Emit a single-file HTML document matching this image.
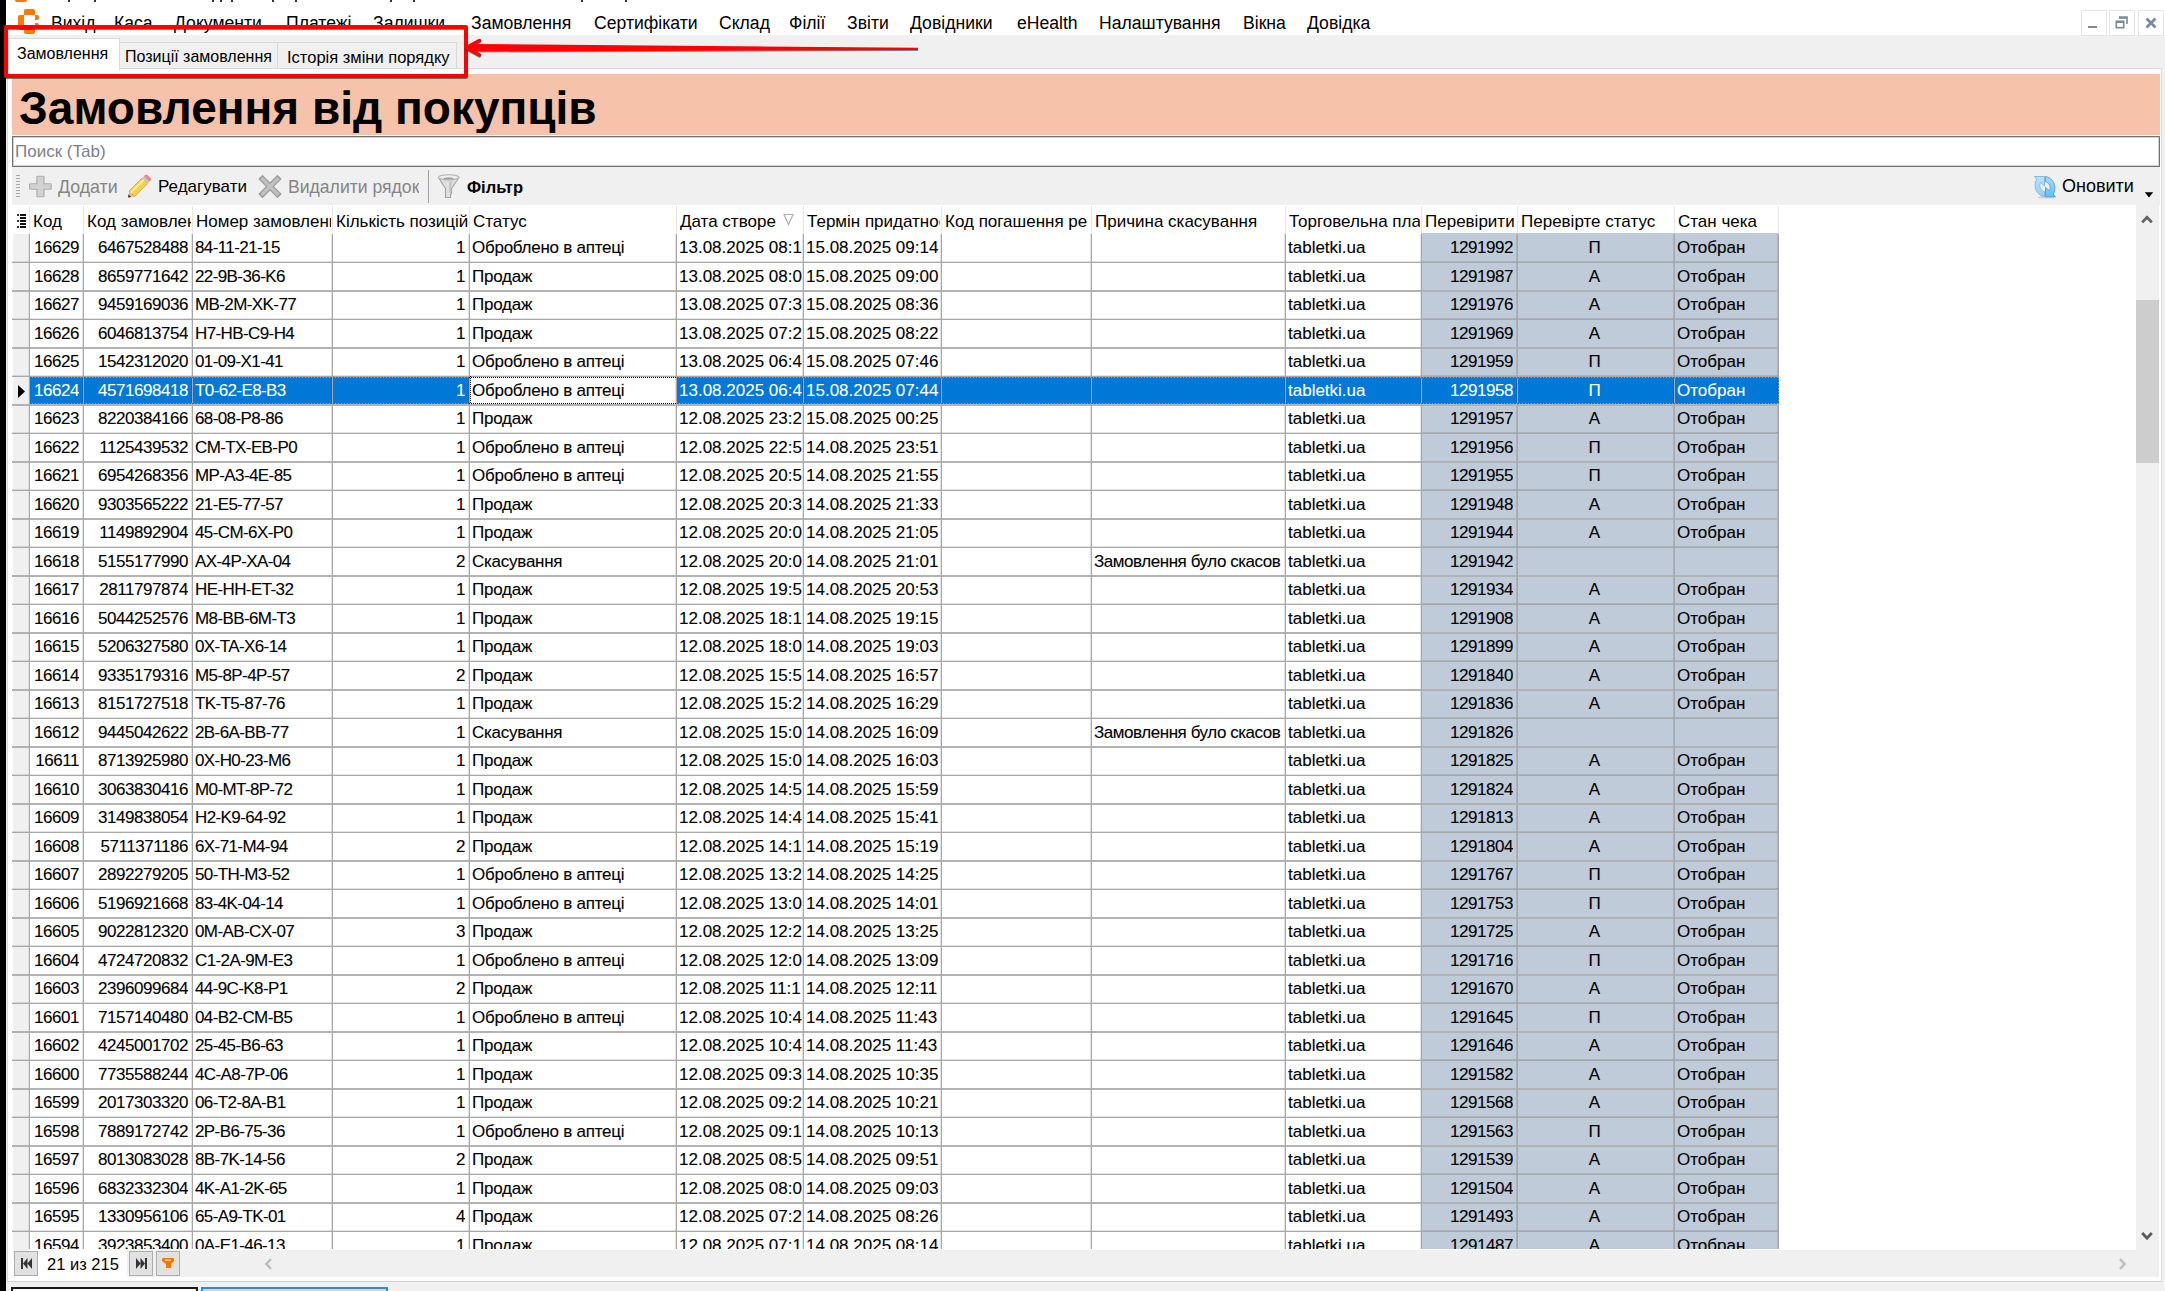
<!DOCTYPE html>
<html><head><meta charset="utf-8"><style>
*{margin:0;padding:0;box-sizing:border-box}
html,body{width:2165px;height:1291px;overflow:hidden;background:#fff;font-family:"Liberation Sans",sans-serif;color:#000}
.a{position:absolute}
.t{position:absolute;white-space:nowrap;overflow:hidden}
#grid .c{position:absolute;white-space:nowrap;overflow:hidden;font-size:17px;line-height:28px;-webkit-text-stroke:0.1px currentColor}
#grid .h{-webkit-text-stroke:0}
#grid .n{letter-spacing:-0.45px}
#grid .m{letter-spacing:-0.6px}
#grid .s{letter-spacing:-0.25px}
#grid .p{letter-spacing:-0.45px}
.menu span{position:absolute;top:12px;font-size:17.6px;line-height:22px;color:#000}
</style></head><body>

<div class="a" style="left:0;top:0;width:6px;height:1291px;background:#000"></div>
<div class="a" style="left:6px;top:35px;width:2159px;height:1256px;background:#f0f0f0"></div>
<div class="a" style="left:68px;top:0;width:2px;height:2px;background:#333"></div>
<div class="a" style="left:94px;top:0;width:2px;height:2px;background:#333"></div>
<div class="a" style="left:212px;top:0;width:2px;height:2px;background:#333"></div>
<div class="a" style="left:220px;top:0;width:2px;height:2px;background:#333"></div>
<div class="a" style="left:231px;top:0;width:2px;height:2px;background:#333"></div>
<div class="a" style="left:272px;top:0;width:2px;height:2px;background:#333"></div>
<div class="a" style="left:295px;top:0;width:2px;height:2px;background:#333"></div>
<div class="a" style="left:390px;top:0;width:2px;height:2px;background:#333"></div>
<div class="a" style="left:413px;top:0;width:2px;height:2px;background:#333"></div>
<div class="a" style="left:581px;top:0;width:2px;height:2px;background:#333"></div>
<div class="a" style="left:625px;top:0;width:2px;height:2px;background:#333"></div>
<div class="menu">
<span style="left:51px">Вихід</span>
<span style="left:114px">Каса</span>
<span style="left:174px">Документи</span>
<span style="left:286px">Платежі</span>
<span style="left:373px">Залишки</span>
<span style="left:471px">Замовлення</span>
<span style="left:594px">Сертифікати</span>
<span style="left:719px">Склад</span>
<span style="left:789px">Філії</span>
<span style="left:847px">Звіти</span>
<span style="left:910px">Довідники</span>
<span style="left:1017px">eHealth</span>
<span style="left:1099px">Налаштування</span>
<span style="left:1243px">Вікна</span>
<span style="left:1307px">Довідка</span>
</div>
<div class="a" style="left:24px;top:9px;width:11px;height:6px;background:#ff7800;border-radius:2px 2px 0 0"></div>
<div class="a" style="left:18px;top:15px;width:6px;height:15px;background:#ff7800;border-radius:2px 0 0 2px"></div>
<div class="a" style="left:35px;top:15px;width:4px;height:5px;background:#ff7800;border-radius:0 2px 2px 0"></div>
<div class="a" style="left:35px;top:23px;width:4px;height:5px;background:#ff7800;border-radius:0 2px 2px 0"></div>
<div class="a" style="left:24px;top:29px;width:11px;height:5px;background:#ff7800;border-radius:0 0 2px 2px"></div>
<div class="a" style="left:15px;top:0;width:12px;height:2px;background:#ff7800;border-radius:0 0 2px 2px"></div>
<div class="a" style="left:2081px;top:10px;width:26px;height:26px;border:1px solid #e6e6e6;background:#fff"></div>
<div class="a" style="left:2109px;top:10px;width:26px;height:26px;border:1px solid #e6e6e6;background:#fff"></div>
<div class="a" style="left:2138px;top:10px;width:26px;height:26px;border:1px solid #e6e6e6;background:#fff"></div>
<div class="a" style="left:2088px;top:26px;width:9px;height:2px;background:#7b8a99"></div>
<svg class="a" style="left:2115px;top:16px" width="14" height="14" viewBox="0 0 14 14"><path d="M4 1h8v7" fill="none" stroke="#7b8a99" stroke-width="1.6"/><rect x="4" y="1" width="8" height="1.8" fill="#7b8a99"/><rect x="1.3" y="5.3" width="7.4" height="6.4" fill="none" stroke="#7b8a99" stroke-width="1.6"/><rect x="1" y="5" width="8" height="2" fill="#7b8a99"/></svg>
<svg class="a" style="left:2145px;top:17px" width="12" height="12" viewBox="0 0 12 12"><path d="M1.5 1.5l9 9M10.5 1.5l-9 9" stroke="#7b8a99" stroke-width="2.8"/></svg>
<div class="a" style="left:119px;top:42px;width:159px;height:27px;background:#f0f0f0;border:1px solid #d9d9d9;border-bottom:none"></div>
<div class="a" style="left:278px;top:42px;width:179px;height:27px;background:#f0f0f0;border:1px solid #d9d9d9;border-bottom:none;border-left:none"></div>
<div class="a" style="left:7px;top:68px;width:2155px;height:1214px;background:#fff;border:1px solid #dadada"></div>
<div class="a" style="left:8px;top:38px;width:112px;height:32px;background:#fff;border:1px solid #d9d9d9;border-bottom:none"></div>
<div class="t" style="left:17px;top:44px;font-size:16px;line-height:20px;color:#000">Замовлення</div>
<div class="t" style="left:125px;top:47px;font-size:16px;line-height:20px;color:#000">Позиції замовлення</div>
<div class="t" style="left:287px;top:47px;font-size:16.5px;line-height:20px;color:#000">Історія зміни порядку</div>
<div class="a" style="left:12px;top:74px;width:2148px;height:61px;background:#f6c3aa"></div>
<div class="t" style="left:19px;top:83px;font-size:46px;line-height:50px;font-weight:bold">Замовлення від покупців</div>
<div class="a" style="left:12px;top:136px;width:2148px;height:31px;background:#fff;border:1px solid #727272;box-shadow:inset 0 0 0 1px rgba(0,0,0,0.18)"></div>
<div class="t" style="left:15px;top:140.5px;font-size:17px;line-height:22px;color:#7d7d90">Поиск (Tab)</div>
<div class="a" style="left:12px;top:167px;width:2148px;height:38px;background:#f0f0f0"></div>
<div class="a" style="left:16px;top:175px;width:4px;height:1px;background:#a8a8a8"></div>
<div class="a" style="left:16px;top:178px;width:4px;height:1px;background:#a8a8a8"></div>
<div class="a" style="left:16px;top:181px;width:4px;height:1px;background:#a8a8a8"></div>
<div class="a" style="left:16px;top:184px;width:4px;height:1px;background:#a8a8a8"></div>
<div class="a" style="left:16px;top:187px;width:4px;height:1px;background:#a8a8a8"></div>
<div class="a" style="left:16px;top:190px;width:4px;height:1px;background:#a8a8a8"></div>
<div class="a" style="left:16px;top:193px;width:4px;height:1px;background:#a8a8a8"></div>
<div class="a" style="left:16px;top:196px;width:4px;height:1px;background:#a8a8a8"></div>
<svg class="a" style="left:28px;top:174px" width="25" height="25" viewBox="28 174 25 25"><path d="M37.7 176.2h5.5a0.8 0.8 0 0 1 .8.8v6.7h6.4a.8.8 0 0 1 .8.8v3.9a.8.8 0 0 1-.8.8H44v6.7a.8.8 0 0 1-.8.8h-5.5a.8.8 0 0 1-.8-.8v-6.7h-6.5a.8.8 0 0 1-.8-.8v-3.9a.8.8 0 0 1 .8-.8h6.5V177a.8.8 0 0 1 .8-.8z" fill="#d2d2d2" stroke="#ababab" stroke-width="1.1"/></svg>
<div class="t" style="left:58px;top:176px;font-size:17.8px;line-height:22px;color:#858585">Додати</div>
<svg class="a" style="left:124px;top:170px" width="32" height="32" viewBox="124 170 32 32"><g transform="translate(138.8 186.8) rotate(-45)"><path d="M-15 0L-10 -3.8H-9.5V3.8H-10z" fill="#f6b89a"/><path d="M-15.3 0L-12.6 -1.9V1.9z" fill="#333"/><rect x="-10" y="-3.9" width="18.5" height="7.8" fill="#f2d04a" stroke="#c8a838" stroke-width="0.8"/><rect x="-10" y="-2.6" width="18.5" height="2.2" fill="#fbeaa0"/><rect x="8.5" y="-3.9" width="2.5" height="7.8" fill="#c9c9c9"/><path d="M11 -3.9h1.8a1.6 1.6 0 0 1 1.6 1.6v4.6a1.6 1.6 0 0 1-1.6 1.6h-1.8z" fill="#ef8585"/></g></svg>
<div class="t" style="left:158px;top:176px;font-size:17px;line-height:22px;color:#000">Редагувати</div>
<svg class="a" style="left:256px;top:172px" width="28" height="28" viewBox="256 172 28 28"><path d="M262.5 179l15 15M277.5 179l-15 15" stroke="#9c9c9c" stroke-width="6" stroke-linecap="square"/><path d="M262.7 179.2l14.6 14.6M277.3 179.2l-14.6 14.6" stroke="#c0c0c0" stroke-width="3.4" stroke-linecap="square"/></svg>
<div class="t" style="left:288px;top:176px;font-size:17.6px;line-height:22px;color:#858585">Видалити рядок</div>
<div class="a" style="left:428px;top:170px;width:1px;height:33px;background:#a0a0a0"></div>
<svg class="a" style="left:434px;top:172px" width="30" height="30" viewBox="434 172 30 30"><path d="M438.5 177.5L445.5 188.5V197.5h5v-3l1-1V188.5L459 177.5z" fill="#e0e0e0" stroke="#a4a4a4" stroke-width="1.2" stroke-linejoin="round"/><path d="M449 181.5L452 181.5L451 188.5V193h-1.5z" fill="#c4c4c4"/><ellipse cx="448.7" cy="177.3" rx="10.2" ry="2.6" fill="#eeeeee" stroke="#b4b4b4" stroke-width="1.1"/><ellipse cx="448.7" cy="178.3" rx="5" ry="0.9" fill="#9a9a9a"/></svg>
<div class="t" style="left:467px;top:176px;font-size:16.5px;line-height:22px;font-weight:bold;color:#000">Фільтр</div>
<svg class="a" style="left:2033px;top:175px" width="24" height="24" viewBox="-1 -1 24 24"><defs><linearGradient id="rg1" x1="0" y1="0" x2="0" y2="1"><stop offset="0" stop-color="#b8e4fc"/><stop offset="1" stop-color="#9ccdf0"/></linearGradient><linearGradient id="rg2" x1="0" y1="0" x2="0" y2="1"><stop offset="0" stop-color="#58c4f8"/><stop offset="1" stop-color="#b0daf6"/></linearGradient></defs><ellipse cx="12" cy="21.4" rx="8.5" ry="1.2" fill="#bdbdbd" opacity="0.6"/><path d="M10.5 0.5L0.5 0.5L2.8 3.2C0.2 6.8 0.6 13 3.6 16.6C5.6 19 8 20.5 10.5 20.8L10.5 15.6C7.4 14.8 5.4 11.6 5.9 8.4C6 7.6 6.3 6.9 6.6 6.4L10.5 10Z" fill="url(#rg1)" stroke="#78b2e4" stroke-width="0.9"/><path d="M10.5 0.5L0.5 0.5L2.8 3.2C0.2 6.8 0.6 13 3.6 16.6C5.6 19 8 20.5 10.5 20.8L10.5 15.6C7.4 14.8 5.4 11.6 5.9 8.4C6 7.6 6.3 6.9 6.6 6.4L10.5 10Z" fill="url(#rg2)" stroke="#5898d4" stroke-width="0.9" transform="rotate(180 11 10.65)"/></svg>
<div class="t" style="left:2062px;top:175px;font-size:18px;line-height:22px;color:#000">Оновити</div>
<svg class="a" style="left:2144px;top:191px" width="10" height="8" viewBox="0 0 10 8"><path d="M0.8 1.2h8.4L5 6.4z" fill="#000"/></svg>
<div id="grid">
<div class="a" style="left:12px;top:205px;width:2124px;height:29px;background:#fff"></div>
<div class="a" style="left:20px;top:214px;width:6px;height:2px;background:#111"></div>
<div class="a" style="left:20px;top:217px;width:6px;height:2px;background:#111"></div>
<div class="a" style="left:20px;top:220px;width:6px;height:2px;background:#111"></div>
<div class="a" style="left:20px;top:223px;width:6px;height:2px;background:#111"></div>
<div class="a" style="left:20px;top:226px;width:6px;height:2px;background:#111"></div>
<div class="a" style="left:17px;top:214px;width:2px;height:2px;background:#333"></div>
<div class="a" style="left:17px;top:220px;width:2px;height:2px;background:#333"></div>
<div class="a" style="left:17px;top:226px;width:2px;height:2px;background:#333"></div>
<div class="a" style="left:29px;top:206px;width:1px;height:28px;background:#e6e6e6"></div>
<div class="c h" style="left:33px;top:208px;width:49px;line-height:28px">Код</div>
<div class="a" style="left:83px;top:206px;width:1px;height:28px;background:#e6e6e6"></div>
<div class="c h" style="left:87px;top:208px;width:104px;line-height:28px">Код замовлен</div>
<div class="a" style="left:192px;top:206px;width:1px;height:28px;background:#e6e6e6"></div>
<div class="c h" style="left:196px;top:208px;width:135px;line-height:28px">Номер замовленн</div>
<div class="a" style="left:332px;top:206px;width:1px;height:28px;background:#e6e6e6"></div>
<div class="c h" style="left:336px;top:208px;width:132px;line-height:28px">Кількість позицій</div>
<div class="a" style="left:469px;top:206px;width:1px;height:28px;background:#e6e6e6"></div>
<div class="c h" style="left:473px;top:208px;width:202px;line-height:28px">Статус</div>
<div class="a" style="left:676px;top:206px;width:1px;height:28px;background:#e6e6e6"></div>
<div class="c h" style="left:680px;top:208px;width:96px;line-height:28px">Дата створе</div>
<div class="a" style="left:803px;top:206px;width:1px;height:28px;background:#e6e6e6"></div>
<div class="c h" style="left:807px;top:208px;width:133px;line-height:28px">Термін придатнос</div>
<div class="a" style="left:941px;top:206px;width:1px;height:28px;background:#e6e6e6"></div>
<div class="c h" style="left:945px;top:208px;width:145px;line-height:28px">Код погашення ре</div>
<div class="a" style="left:1091px;top:206px;width:1px;height:28px;background:#e6e6e6"></div>
<div class="c h" style="left:1095px;top:208px;width:189px;line-height:28px">Причина скасування</div>
<div class="a" style="left:1285px;top:206px;width:1px;height:28px;background:#e6e6e6"></div>
<div class="c h" style="left:1289px;top:208px;width:131px;line-height:28px">Торговельна пла</div>
<div class="a" style="left:1421px;top:206px;width:1px;height:28px;background:#e6e6e6"></div>
<div class="c h" style="left:1425px;top:208px;width:91px;line-height:28px">Перевірити</div>
<div class="a" style="left:1517px;top:206px;width:1px;height:28px;background:#e6e6e6"></div>
<div class="c h" style="left:1521px;top:208px;width:152px;line-height:28px">Перевірте статус</div>
<div class="a" style="left:1674px;top:206px;width:1px;height:28px;background:#e6e6e6"></div>
<div class="c h" style="left:1678px;top:208px;width:99px;line-height:28px">Стан чека</div>
<div class="a" style="left:1778px;top:206px;width:1px;height:28px;background:#e6e6e6"></div>
<svg class="a" style="left:783px;top:213px" width="11" height="13" viewBox="0 0 11 13"><path d="M1 1.5h9L5.5 11.5z" fill="none" stroke="#b0b0b0" stroke-width="1.2"/></svg>
<div class="a" style="left:13px;top:234px;width:15px;height:28px;background:#f0f0f0"></div>
<div class="a" style="left:1421px;top:233px;width:357px;height:29px;background:#bfcbd8"></div>
<div class="c n" style="left:31px;width:48px;text-align:right;top:234px;height:28px;color:#000">16629</div>
<div class="c n" style="left:85px;width:103px;text-align:right;top:234px;height:28px;color:#000">6467528488</div>
<div class="c m" style="left:195px;width:136px;top:234px;height:28px;color:#000">84-11-21-15</div>
<div class="c n" style="left:334px;width:131px;text-align:right;top:234px;height:28px;color:#000">1</div>
<div class="c s" style="left:472px;width:203px;top:234px;height:28px;color:#000">Оброблено в аптеці</div>
<div class="c" style="left:679px;width:123px;top:234px;height:28px;color:#000">13.08.2025 08:1</div>
<div class="c" style="left:806px;width:134px;top:234px;height:28px;color:#000">15.08.2025 09:14</div>
<div class="c" style="left:1288px;width:132px;top:234px;height:28px;color:#000">tabletki.ua</div>
<div class="c n" style="left:1423px;width:90px;text-align:right;top:234px;height:28px;color:#000">1291992</div>
<div class="c" style="left:1517px;width:155px;text-align:center;top:234px;height:28px;color:#000">П</div>
<div class="c" style="left:1677px;width:100px;top:234px;height:28px;color:#000">Отобран</div>
<div class="a" style="left:13px;top:263px;width:15px;height:27px;background:#f0f0f0"></div>
<div class="a" style="left:1421px;top:262px;width:357px;height:28px;background:#bfcbd8"></div>
<div class="c n" style="left:31px;width:48px;text-align:right;top:263px;height:27px;color:#000">16628</div>
<div class="c n" style="left:85px;width:103px;text-align:right;top:263px;height:27px;color:#000">8659771642</div>
<div class="c m" style="left:195px;width:136px;top:263px;height:27px;color:#000">22-9B-36-K6</div>
<div class="c n" style="left:334px;width:131px;text-align:right;top:263px;height:27px;color:#000">1</div>
<div class="c s" style="left:472px;width:203px;top:263px;height:27px;color:#000">Продаж</div>
<div class="c" style="left:679px;width:123px;top:263px;height:27px;color:#000">13.08.2025 08:0</div>
<div class="c" style="left:806px;width:134px;top:263px;height:27px;color:#000">15.08.2025 09:00</div>
<div class="c" style="left:1288px;width:132px;top:263px;height:27px;color:#000">tabletki.ua</div>
<div class="c n" style="left:1423px;width:90px;text-align:right;top:263px;height:27px;color:#000">1291987</div>
<div class="c" style="left:1517px;width:155px;text-align:center;top:263px;height:27px;color:#000">А</div>
<div class="c" style="left:1677px;width:100px;top:263px;height:27px;color:#000">Отобран</div>
<div class="a" style="left:13px;top:291px;width:15px;height:28px;background:#f0f0f0"></div>
<div class="a" style="left:1421px;top:290px;width:357px;height:29px;background:#bfcbd8"></div>
<div class="c n" style="left:31px;width:48px;text-align:right;top:291px;height:28px;color:#000">16627</div>
<div class="c n" style="left:85px;width:103px;text-align:right;top:291px;height:28px;color:#000">9459169036</div>
<div class="c m" style="left:195px;width:136px;top:291px;height:28px;color:#000">MB-2M-XK-77</div>
<div class="c n" style="left:334px;width:131px;text-align:right;top:291px;height:28px;color:#000">1</div>
<div class="c s" style="left:472px;width:203px;top:291px;height:28px;color:#000">Продаж</div>
<div class="c" style="left:679px;width:123px;top:291px;height:28px;color:#000">13.08.2025 07:3</div>
<div class="c" style="left:806px;width:134px;top:291px;height:28px;color:#000">15.08.2025 08:36</div>
<div class="c" style="left:1288px;width:132px;top:291px;height:28px;color:#000">tabletki.ua</div>
<div class="c n" style="left:1423px;width:90px;text-align:right;top:291px;height:28px;color:#000">1291976</div>
<div class="c" style="left:1517px;width:155px;text-align:center;top:291px;height:28px;color:#000">А</div>
<div class="c" style="left:1677px;width:100px;top:291px;height:28px;color:#000">Отобран</div>
<div class="a" style="left:13px;top:320px;width:15px;height:27px;background:#f0f0f0"></div>
<div class="a" style="left:1421px;top:319px;width:357px;height:28px;background:#bfcbd8"></div>
<div class="c n" style="left:31px;width:48px;text-align:right;top:320px;height:27px;color:#000">16626</div>
<div class="c n" style="left:85px;width:103px;text-align:right;top:320px;height:27px;color:#000">6046813754</div>
<div class="c m" style="left:195px;width:136px;top:320px;height:27px;color:#000">H7-HB-C9-H4</div>
<div class="c n" style="left:334px;width:131px;text-align:right;top:320px;height:27px;color:#000">1</div>
<div class="c s" style="left:472px;width:203px;top:320px;height:27px;color:#000">Продаж</div>
<div class="c" style="left:679px;width:123px;top:320px;height:27px;color:#000">13.08.2025 07:2</div>
<div class="c" style="left:806px;width:134px;top:320px;height:27px;color:#000">15.08.2025 08:22</div>
<div class="c" style="left:1288px;width:132px;top:320px;height:27px;color:#000">tabletki.ua</div>
<div class="c n" style="left:1423px;width:90px;text-align:right;top:320px;height:27px;color:#000">1291969</div>
<div class="c" style="left:1517px;width:155px;text-align:center;top:320px;height:27px;color:#000">А</div>
<div class="c" style="left:1677px;width:100px;top:320px;height:27px;color:#000">Отобран</div>
<div class="a" style="left:13px;top:348px;width:15px;height:28px;background:#f0f0f0"></div>
<div class="a" style="left:1421px;top:347px;width:357px;height:29px;background:#bfcbd8"></div>
<div class="c n" style="left:31px;width:48px;text-align:right;top:348px;height:28px;color:#000">16625</div>
<div class="c n" style="left:85px;width:103px;text-align:right;top:348px;height:28px;color:#000">1542312020</div>
<div class="c m" style="left:195px;width:136px;top:348px;height:28px;color:#000">01-09-X1-41</div>
<div class="c n" style="left:334px;width:131px;text-align:right;top:348px;height:28px;color:#000">1</div>
<div class="c s" style="left:472px;width:203px;top:348px;height:28px;color:#000">Оброблено в аптеці</div>
<div class="c" style="left:679px;width:123px;top:348px;height:28px;color:#000">13.08.2025 06:4</div>
<div class="c" style="left:806px;width:134px;top:348px;height:28px;color:#000">15.08.2025 07:46</div>
<div class="c" style="left:1288px;width:132px;top:348px;height:28px;color:#000">tabletki.ua</div>
<div class="c n" style="left:1423px;width:90px;text-align:right;top:348px;height:28px;color:#000">1291959</div>
<div class="c" style="left:1517px;width:155px;text-align:center;top:348px;height:28px;color:#000">П</div>
<div class="c" style="left:1677px;width:100px;top:348px;height:28px;color:#000">Отобран</div>
<div class="a" style="left:13px;top:377px;width:15px;height:27px;background:#f0f0f0"></div>
<svg class="a" style="left:17px;top:385px" width="9" height="13" viewBox="0 0 9 13"><path d="M1 0l7 6.5L1 13z" fill="#000"/></svg>
<div class="a" style="left:29px;top:376px;width:1749px;height:28px;background:#0078d7"></div>
<div class="a" style="left:470px;top:377px;width:206px;height:27px;background:#fff"></div>
<div class="c n" style="left:31px;width:48px;text-align:right;top:377px;height:27px;color:#fff">16624</div>
<div class="c n" style="left:85px;width:103px;text-align:right;top:377px;height:27px;color:#fff">4571698418</div>
<div class="c m" style="left:195px;width:136px;top:377px;height:27px;color:#fff">T0-62-E8-B3</div>
<div class="c n" style="left:334px;width:131px;text-align:right;top:377px;height:27px;color:#fff">1</div>
<div class="c s" style="left:472px;width:203px;top:377px;height:27px;color:#000">Оброблено в аптеці</div>
<div class="c" style="left:679px;width:123px;top:377px;height:27px;color:#fff">13.08.2025 06:4</div>
<div class="c" style="left:806px;width:134px;top:377px;height:27px;color:#fff">15.08.2025 07:44</div>
<div class="c" style="left:1288px;width:132px;top:377px;height:27px;color:#fff">tabletki.ua</div>
<div class="c n" style="left:1423px;width:90px;text-align:right;top:377px;height:27px;color:#fff">1291958</div>
<div class="c" style="left:1517px;width:155px;text-align:center;top:377px;height:27px;color:#fff">П</div>
<div class="c" style="left:1677px;width:100px;top:377px;height:27px;color:#fff">Отобран</div>
<div class="a" style="left:13px;top:405px;width:15px;height:28px;background:#f0f0f0"></div>
<div class="a" style="left:1421px;top:404px;width:357px;height:29px;background:#bfcbd8"></div>
<div class="c n" style="left:31px;width:48px;text-align:right;top:405px;height:28px;color:#000">16623</div>
<div class="c n" style="left:85px;width:103px;text-align:right;top:405px;height:28px;color:#000">8220384166</div>
<div class="c m" style="left:195px;width:136px;top:405px;height:28px;color:#000">68-08-P8-86</div>
<div class="c n" style="left:334px;width:131px;text-align:right;top:405px;height:28px;color:#000">1</div>
<div class="c s" style="left:472px;width:203px;top:405px;height:28px;color:#000">Продаж</div>
<div class="c" style="left:679px;width:123px;top:405px;height:28px;color:#000">12.08.2025 23:2</div>
<div class="c" style="left:806px;width:134px;top:405px;height:28px;color:#000">15.08.2025 00:25</div>
<div class="c" style="left:1288px;width:132px;top:405px;height:28px;color:#000">tabletki.ua</div>
<div class="c n" style="left:1423px;width:90px;text-align:right;top:405px;height:28px;color:#000">1291957</div>
<div class="c" style="left:1517px;width:155px;text-align:center;top:405px;height:28px;color:#000">А</div>
<div class="c" style="left:1677px;width:100px;top:405px;height:28px;color:#000">Отобран</div>
<div class="a" style="left:13px;top:434px;width:15px;height:27px;background:#f0f0f0"></div>
<div class="a" style="left:1421px;top:433px;width:357px;height:28px;background:#bfcbd8"></div>
<div class="c n" style="left:31px;width:48px;text-align:right;top:434px;height:27px;color:#000">16622</div>
<div class="c n" style="left:85px;width:103px;text-align:right;top:434px;height:27px;color:#000">1125439532</div>
<div class="c m" style="left:195px;width:136px;top:434px;height:27px;color:#000">CM-TX-EB-P0</div>
<div class="c n" style="left:334px;width:131px;text-align:right;top:434px;height:27px;color:#000">1</div>
<div class="c s" style="left:472px;width:203px;top:434px;height:27px;color:#000">Оброблено в аптеці</div>
<div class="c" style="left:679px;width:123px;top:434px;height:27px;color:#000">12.08.2025 22:5</div>
<div class="c" style="left:806px;width:134px;top:434px;height:27px;color:#000">14.08.2025 23:51</div>
<div class="c" style="left:1288px;width:132px;top:434px;height:27px;color:#000">tabletki.ua</div>
<div class="c n" style="left:1423px;width:90px;text-align:right;top:434px;height:27px;color:#000">1291956</div>
<div class="c" style="left:1517px;width:155px;text-align:center;top:434px;height:27px;color:#000">П</div>
<div class="c" style="left:1677px;width:100px;top:434px;height:27px;color:#000">Отобран</div>
<div class="a" style="left:13px;top:462px;width:15px;height:28px;background:#f0f0f0"></div>
<div class="a" style="left:1421px;top:461px;width:357px;height:29px;background:#bfcbd8"></div>
<div class="c n" style="left:31px;width:48px;text-align:right;top:462px;height:28px;color:#000">16621</div>
<div class="c n" style="left:85px;width:103px;text-align:right;top:462px;height:28px;color:#000">6954268356</div>
<div class="c m" style="left:195px;width:136px;top:462px;height:28px;color:#000">MP-A3-4E-85</div>
<div class="c n" style="left:334px;width:131px;text-align:right;top:462px;height:28px;color:#000">1</div>
<div class="c s" style="left:472px;width:203px;top:462px;height:28px;color:#000">Оброблено в аптеці</div>
<div class="c" style="left:679px;width:123px;top:462px;height:28px;color:#000">12.08.2025 20:5</div>
<div class="c" style="left:806px;width:134px;top:462px;height:28px;color:#000">14.08.2025 21:55</div>
<div class="c" style="left:1288px;width:132px;top:462px;height:28px;color:#000">tabletki.ua</div>
<div class="c n" style="left:1423px;width:90px;text-align:right;top:462px;height:28px;color:#000">1291955</div>
<div class="c" style="left:1517px;width:155px;text-align:center;top:462px;height:28px;color:#000">П</div>
<div class="c" style="left:1677px;width:100px;top:462px;height:28px;color:#000">Отобран</div>
<div class="a" style="left:13px;top:491px;width:15px;height:27px;background:#f0f0f0"></div>
<div class="a" style="left:1421px;top:490px;width:357px;height:28px;background:#bfcbd8"></div>
<div class="c n" style="left:31px;width:48px;text-align:right;top:491px;height:27px;color:#000">16620</div>
<div class="c n" style="left:85px;width:103px;text-align:right;top:491px;height:27px;color:#000">9303565222</div>
<div class="c m" style="left:195px;width:136px;top:491px;height:27px;color:#000">21-E5-77-57</div>
<div class="c n" style="left:334px;width:131px;text-align:right;top:491px;height:27px;color:#000">1</div>
<div class="c s" style="left:472px;width:203px;top:491px;height:27px;color:#000">Продаж</div>
<div class="c" style="left:679px;width:123px;top:491px;height:27px;color:#000">12.08.2025 20:3</div>
<div class="c" style="left:806px;width:134px;top:491px;height:27px;color:#000">14.08.2025 21:33</div>
<div class="c" style="left:1288px;width:132px;top:491px;height:27px;color:#000">tabletki.ua</div>
<div class="c n" style="left:1423px;width:90px;text-align:right;top:491px;height:27px;color:#000">1291948</div>
<div class="c" style="left:1517px;width:155px;text-align:center;top:491px;height:27px;color:#000">А</div>
<div class="c" style="left:1677px;width:100px;top:491px;height:27px;color:#000">Отобран</div>
<div class="a" style="left:13px;top:519px;width:15px;height:28px;background:#f0f0f0"></div>
<div class="a" style="left:1421px;top:518px;width:357px;height:29px;background:#bfcbd8"></div>
<div class="c n" style="left:31px;width:48px;text-align:right;top:519px;height:28px;color:#000">16619</div>
<div class="c n" style="left:85px;width:103px;text-align:right;top:519px;height:28px;color:#000">1149892904</div>
<div class="c m" style="left:195px;width:136px;top:519px;height:28px;color:#000">45-CM-6X-P0</div>
<div class="c n" style="left:334px;width:131px;text-align:right;top:519px;height:28px;color:#000">1</div>
<div class="c s" style="left:472px;width:203px;top:519px;height:28px;color:#000">Продаж</div>
<div class="c" style="left:679px;width:123px;top:519px;height:28px;color:#000">12.08.2025 20:0</div>
<div class="c" style="left:806px;width:134px;top:519px;height:28px;color:#000">14.08.2025 21:05</div>
<div class="c" style="left:1288px;width:132px;top:519px;height:28px;color:#000">tabletki.ua</div>
<div class="c n" style="left:1423px;width:90px;text-align:right;top:519px;height:28px;color:#000">1291944</div>
<div class="c" style="left:1517px;width:155px;text-align:center;top:519px;height:28px;color:#000">А</div>
<div class="c" style="left:1677px;width:100px;top:519px;height:28px;color:#000">Отобран</div>
<div class="a" style="left:13px;top:548px;width:15px;height:27px;background:#f0f0f0"></div>
<div class="a" style="left:1421px;top:547px;width:357px;height:28px;background:#bfcbd8"></div>
<div class="c n" style="left:31px;width:48px;text-align:right;top:548px;height:27px;color:#000">16618</div>
<div class="c n" style="left:85px;width:103px;text-align:right;top:548px;height:27px;color:#000">5155177990</div>
<div class="c m" style="left:195px;width:136px;top:548px;height:27px;color:#000">AX-4P-XA-04</div>
<div class="c n" style="left:334px;width:131px;text-align:right;top:548px;height:27px;color:#000">2</div>
<div class="c s" style="left:472px;width:203px;top:548px;height:27px;color:#000">Скасування</div>
<div class="c" style="left:679px;width:123px;top:548px;height:27px;color:#000">12.08.2025 20:0</div>
<div class="c" style="left:806px;width:134px;top:548px;height:27px;color:#000">14.08.2025 21:01</div>
<div class="c p" style="left:1094px;width:190px;top:548px;height:27px;color:#000">Замовлення було скасов</div>
<div class="c" style="left:1288px;width:132px;top:548px;height:27px;color:#000">tabletki.ua</div>
<div class="c n" style="left:1423px;width:90px;text-align:right;top:548px;height:27px;color:#000">1291942</div>
<div class="a" style="left:13px;top:576px;width:15px;height:28px;background:#f0f0f0"></div>
<div class="a" style="left:1421px;top:575px;width:357px;height:29px;background:#bfcbd8"></div>
<div class="c n" style="left:31px;width:48px;text-align:right;top:576px;height:28px;color:#000">16617</div>
<div class="c n" style="left:85px;width:103px;text-align:right;top:576px;height:28px;color:#000">2811797874</div>
<div class="c m" style="left:195px;width:136px;top:576px;height:28px;color:#000">HE-HH-ET-32</div>
<div class="c n" style="left:334px;width:131px;text-align:right;top:576px;height:28px;color:#000">1</div>
<div class="c s" style="left:472px;width:203px;top:576px;height:28px;color:#000">Продаж</div>
<div class="c" style="left:679px;width:123px;top:576px;height:28px;color:#000">12.08.2025 19:5</div>
<div class="c" style="left:806px;width:134px;top:576px;height:28px;color:#000">14.08.2025 20:53</div>
<div class="c" style="left:1288px;width:132px;top:576px;height:28px;color:#000">tabletki.ua</div>
<div class="c n" style="left:1423px;width:90px;text-align:right;top:576px;height:28px;color:#000">1291934</div>
<div class="c" style="left:1517px;width:155px;text-align:center;top:576px;height:28px;color:#000">А</div>
<div class="c" style="left:1677px;width:100px;top:576px;height:28px;color:#000">Отобран</div>
<div class="a" style="left:13px;top:605px;width:15px;height:27px;background:#f0f0f0"></div>
<div class="a" style="left:1421px;top:604px;width:357px;height:28px;background:#bfcbd8"></div>
<div class="c n" style="left:31px;width:48px;text-align:right;top:605px;height:27px;color:#000">16616</div>
<div class="c n" style="left:85px;width:103px;text-align:right;top:605px;height:27px;color:#000">5044252576</div>
<div class="c m" style="left:195px;width:136px;top:605px;height:27px;color:#000">M8-BB-6M-T3</div>
<div class="c n" style="left:334px;width:131px;text-align:right;top:605px;height:27px;color:#000">1</div>
<div class="c s" style="left:472px;width:203px;top:605px;height:27px;color:#000">Продаж</div>
<div class="c" style="left:679px;width:123px;top:605px;height:27px;color:#000">12.08.2025 18:1</div>
<div class="c" style="left:806px;width:134px;top:605px;height:27px;color:#000">14.08.2025 19:15</div>
<div class="c" style="left:1288px;width:132px;top:605px;height:27px;color:#000">tabletki.ua</div>
<div class="c n" style="left:1423px;width:90px;text-align:right;top:605px;height:27px;color:#000">1291908</div>
<div class="c" style="left:1517px;width:155px;text-align:center;top:605px;height:27px;color:#000">А</div>
<div class="c" style="left:1677px;width:100px;top:605px;height:27px;color:#000">Отобран</div>
<div class="a" style="left:13px;top:633px;width:15px;height:28px;background:#f0f0f0"></div>
<div class="a" style="left:1421px;top:632px;width:357px;height:29px;background:#bfcbd8"></div>
<div class="c n" style="left:31px;width:48px;text-align:right;top:633px;height:28px;color:#000">16615</div>
<div class="c n" style="left:85px;width:103px;text-align:right;top:633px;height:28px;color:#000">5206327580</div>
<div class="c m" style="left:195px;width:136px;top:633px;height:28px;color:#000">0X-TA-X6-14</div>
<div class="c n" style="left:334px;width:131px;text-align:right;top:633px;height:28px;color:#000">1</div>
<div class="c s" style="left:472px;width:203px;top:633px;height:28px;color:#000">Продаж</div>
<div class="c" style="left:679px;width:123px;top:633px;height:28px;color:#000">12.08.2025 18:0</div>
<div class="c" style="left:806px;width:134px;top:633px;height:28px;color:#000">14.08.2025 19:03</div>
<div class="c" style="left:1288px;width:132px;top:633px;height:28px;color:#000">tabletki.ua</div>
<div class="c n" style="left:1423px;width:90px;text-align:right;top:633px;height:28px;color:#000">1291899</div>
<div class="c" style="left:1517px;width:155px;text-align:center;top:633px;height:28px;color:#000">А</div>
<div class="c" style="left:1677px;width:100px;top:633px;height:28px;color:#000">Отобран</div>
<div class="a" style="left:13px;top:662px;width:15px;height:27px;background:#f0f0f0"></div>
<div class="a" style="left:1421px;top:661px;width:357px;height:28px;background:#bfcbd8"></div>
<div class="c n" style="left:31px;width:48px;text-align:right;top:662px;height:27px;color:#000">16614</div>
<div class="c n" style="left:85px;width:103px;text-align:right;top:662px;height:27px;color:#000">9335179316</div>
<div class="c m" style="left:195px;width:136px;top:662px;height:27px;color:#000">M5-8P-4P-57</div>
<div class="c n" style="left:334px;width:131px;text-align:right;top:662px;height:27px;color:#000">2</div>
<div class="c s" style="left:472px;width:203px;top:662px;height:27px;color:#000">Продаж</div>
<div class="c" style="left:679px;width:123px;top:662px;height:27px;color:#000">12.08.2025 15:5</div>
<div class="c" style="left:806px;width:134px;top:662px;height:27px;color:#000">14.08.2025 16:57</div>
<div class="c" style="left:1288px;width:132px;top:662px;height:27px;color:#000">tabletki.ua</div>
<div class="c n" style="left:1423px;width:90px;text-align:right;top:662px;height:27px;color:#000">1291840</div>
<div class="c" style="left:1517px;width:155px;text-align:center;top:662px;height:27px;color:#000">А</div>
<div class="c" style="left:1677px;width:100px;top:662px;height:27px;color:#000">Отобран</div>
<div class="a" style="left:13px;top:690px;width:15px;height:28px;background:#f0f0f0"></div>
<div class="a" style="left:1421px;top:689px;width:357px;height:29px;background:#bfcbd8"></div>
<div class="c n" style="left:31px;width:48px;text-align:right;top:690px;height:28px;color:#000">16613</div>
<div class="c n" style="left:85px;width:103px;text-align:right;top:690px;height:28px;color:#000">8151727518</div>
<div class="c m" style="left:195px;width:136px;top:690px;height:28px;color:#000">TK-T5-87-76</div>
<div class="c n" style="left:334px;width:131px;text-align:right;top:690px;height:28px;color:#000">1</div>
<div class="c s" style="left:472px;width:203px;top:690px;height:28px;color:#000">Продаж</div>
<div class="c" style="left:679px;width:123px;top:690px;height:28px;color:#000">12.08.2025 15:2</div>
<div class="c" style="left:806px;width:134px;top:690px;height:28px;color:#000">14.08.2025 16:29</div>
<div class="c" style="left:1288px;width:132px;top:690px;height:28px;color:#000">tabletki.ua</div>
<div class="c n" style="left:1423px;width:90px;text-align:right;top:690px;height:28px;color:#000">1291836</div>
<div class="c" style="left:1517px;width:155px;text-align:center;top:690px;height:28px;color:#000">А</div>
<div class="c" style="left:1677px;width:100px;top:690px;height:28px;color:#000">Отобран</div>
<div class="a" style="left:13px;top:719px;width:15px;height:27px;background:#f0f0f0"></div>
<div class="a" style="left:1421px;top:718px;width:357px;height:28px;background:#bfcbd8"></div>
<div class="c n" style="left:31px;width:48px;text-align:right;top:719px;height:27px;color:#000">16612</div>
<div class="c n" style="left:85px;width:103px;text-align:right;top:719px;height:27px;color:#000">9445042622</div>
<div class="c m" style="left:195px;width:136px;top:719px;height:27px;color:#000">2B-6A-BB-77</div>
<div class="c n" style="left:334px;width:131px;text-align:right;top:719px;height:27px;color:#000">1</div>
<div class="c s" style="left:472px;width:203px;top:719px;height:27px;color:#000">Скасування</div>
<div class="c" style="left:679px;width:123px;top:719px;height:27px;color:#000">12.08.2025 15:0</div>
<div class="c" style="left:806px;width:134px;top:719px;height:27px;color:#000">14.08.2025 16:09</div>
<div class="c p" style="left:1094px;width:190px;top:719px;height:27px;color:#000">Замовлення було скасов</div>
<div class="c" style="left:1288px;width:132px;top:719px;height:27px;color:#000">tabletki.ua</div>
<div class="c n" style="left:1423px;width:90px;text-align:right;top:719px;height:27px;color:#000">1291826</div>
<div class="a" style="left:13px;top:747px;width:15px;height:28px;background:#f0f0f0"></div>
<div class="a" style="left:1421px;top:746px;width:357px;height:29px;background:#bfcbd8"></div>
<div class="c n" style="left:31px;width:48px;text-align:right;top:747px;height:28px;color:#000">16611</div>
<div class="c n" style="left:85px;width:103px;text-align:right;top:747px;height:28px;color:#000">8713925980</div>
<div class="c m" style="left:195px;width:136px;top:747px;height:28px;color:#000">0X-H0-23-M6</div>
<div class="c n" style="left:334px;width:131px;text-align:right;top:747px;height:28px;color:#000">1</div>
<div class="c s" style="left:472px;width:203px;top:747px;height:28px;color:#000">Продаж</div>
<div class="c" style="left:679px;width:123px;top:747px;height:28px;color:#000">12.08.2025 15:0</div>
<div class="c" style="left:806px;width:134px;top:747px;height:28px;color:#000">14.08.2025 16:03</div>
<div class="c" style="left:1288px;width:132px;top:747px;height:28px;color:#000">tabletki.ua</div>
<div class="c n" style="left:1423px;width:90px;text-align:right;top:747px;height:28px;color:#000">1291825</div>
<div class="c" style="left:1517px;width:155px;text-align:center;top:747px;height:28px;color:#000">А</div>
<div class="c" style="left:1677px;width:100px;top:747px;height:28px;color:#000">Отобран</div>
<div class="a" style="left:13px;top:776px;width:15px;height:27px;background:#f0f0f0"></div>
<div class="a" style="left:1421px;top:775px;width:357px;height:28px;background:#bfcbd8"></div>
<div class="c n" style="left:31px;width:48px;text-align:right;top:776px;height:27px;color:#000">16610</div>
<div class="c n" style="left:85px;width:103px;text-align:right;top:776px;height:27px;color:#000">3063830416</div>
<div class="c m" style="left:195px;width:136px;top:776px;height:27px;color:#000">M0-MT-8P-72</div>
<div class="c n" style="left:334px;width:131px;text-align:right;top:776px;height:27px;color:#000">1</div>
<div class="c s" style="left:472px;width:203px;top:776px;height:27px;color:#000">Продаж</div>
<div class="c" style="left:679px;width:123px;top:776px;height:27px;color:#000">12.08.2025 14:5</div>
<div class="c" style="left:806px;width:134px;top:776px;height:27px;color:#000">14.08.2025 15:59</div>
<div class="c" style="left:1288px;width:132px;top:776px;height:27px;color:#000">tabletki.ua</div>
<div class="c n" style="left:1423px;width:90px;text-align:right;top:776px;height:27px;color:#000">1291824</div>
<div class="c" style="left:1517px;width:155px;text-align:center;top:776px;height:27px;color:#000">А</div>
<div class="c" style="left:1677px;width:100px;top:776px;height:27px;color:#000">Отобран</div>
<div class="a" style="left:13px;top:804px;width:15px;height:28px;background:#f0f0f0"></div>
<div class="a" style="left:1421px;top:803px;width:357px;height:29px;background:#bfcbd8"></div>
<div class="c n" style="left:31px;width:48px;text-align:right;top:804px;height:28px;color:#000">16609</div>
<div class="c n" style="left:85px;width:103px;text-align:right;top:804px;height:28px;color:#000">3149838054</div>
<div class="c m" style="left:195px;width:136px;top:804px;height:28px;color:#000">H2-K9-64-92</div>
<div class="c n" style="left:334px;width:131px;text-align:right;top:804px;height:28px;color:#000">1</div>
<div class="c s" style="left:472px;width:203px;top:804px;height:28px;color:#000">Продаж</div>
<div class="c" style="left:679px;width:123px;top:804px;height:28px;color:#000">12.08.2025 14:4</div>
<div class="c" style="left:806px;width:134px;top:804px;height:28px;color:#000">14.08.2025 15:41</div>
<div class="c" style="left:1288px;width:132px;top:804px;height:28px;color:#000">tabletki.ua</div>
<div class="c n" style="left:1423px;width:90px;text-align:right;top:804px;height:28px;color:#000">1291813</div>
<div class="c" style="left:1517px;width:155px;text-align:center;top:804px;height:28px;color:#000">А</div>
<div class="c" style="left:1677px;width:100px;top:804px;height:28px;color:#000">Отобран</div>
<div class="a" style="left:13px;top:833px;width:15px;height:27px;background:#f0f0f0"></div>
<div class="a" style="left:1421px;top:832px;width:357px;height:28px;background:#bfcbd8"></div>
<div class="c n" style="left:31px;width:48px;text-align:right;top:833px;height:27px;color:#000">16608</div>
<div class="c n" style="left:85px;width:103px;text-align:right;top:833px;height:27px;color:#000">5711371186</div>
<div class="c m" style="left:195px;width:136px;top:833px;height:27px;color:#000">6X-71-M4-94</div>
<div class="c n" style="left:334px;width:131px;text-align:right;top:833px;height:27px;color:#000">2</div>
<div class="c s" style="left:472px;width:203px;top:833px;height:27px;color:#000">Продаж</div>
<div class="c" style="left:679px;width:123px;top:833px;height:27px;color:#000">12.08.2025 14:1</div>
<div class="c" style="left:806px;width:134px;top:833px;height:27px;color:#000">14.08.2025 15:19</div>
<div class="c" style="left:1288px;width:132px;top:833px;height:27px;color:#000">tabletki.ua</div>
<div class="c n" style="left:1423px;width:90px;text-align:right;top:833px;height:27px;color:#000">1291804</div>
<div class="c" style="left:1517px;width:155px;text-align:center;top:833px;height:27px;color:#000">А</div>
<div class="c" style="left:1677px;width:100px;top:833px;height:27px;color:#000">Отобран</div>
<div class="a" style="left:13px;top:861px;width:15px;height:28px;background:#f0f0f0"></div>
<div class="a" style="left:1421px;top:860px;width:357px;height:29px;background:#bfcbd8"></div>
<div class="c n" style="left:31px;width:48px;text-align:right;top:861px;height:28px;color:#000">16607</div>
<div class="c n" style="left:85px;width:103px;text-align:right;top:861px;height:28px;color:#000">2892279205</div>
<div class="c m" style="left:195px;width:136px;top:861px;height:28px;color:#000">50-TH-M3-52</div>
<div class="c n" style="left:334px;width:131px;text-align:right;top:861px;height:28px;color:#000">1</div>
<div class="c s" style="left:472px;width:203px;top:861px;height:28px;color:#000">Оброблено в аптеці</div>
<div class="c" style="left:679px;width:123px;top:861px;height:28px;color:#000">12.08.2025 13:2</div>
<div class="c" style="left:806px;width:134px;top:861px;height:28px;color:#000">14.08.2025 14:25</div>
<div class="c" style="left:1288px;width:132px;top:861px;height:28px;color:#000">tabletki.ua</div>
<div class="c n" style="left:1423px;width:90px;text-align:right;top:861px;height:28px;color:#000">1291767</div>
<div class="c" style="left:1517px;width:155px;text-align:center;top:861px;height:28px;color:#000">П</div>
<div class="c" style="left:1677px;width:100px;top:861px;height:28px;color:#000">Отобран</div>
<div class="a" style="left:13px;top:890px;width:15px;height:27px;background:#f0f0f0"></div>
<div class="a" style="left:1421px;top:889px;width:357px;height:28px;background:#bfcbd8"></div>
<div class="c n" style="left:31px;width:48px;text-align:right;top:890px;height:27px;color:#000">16606</div>
<div class="c n" style="left:85px;width:103px;text-align:right;top:890px;height:27px;color:#000">5196921668</div>
<div class="c m" style="left:195px;width:136px;top:890px;height:27px;color:#000">83-4K-04-14</div>
<div class="c n" style="left:334px;width:131px;text-align:right;top:890px;height:27px;color:#000">1</div>
<div class="c s" style="left:472px;width:203px;top:890px;height:27px;color:#000">Оброблено в аптеці</div>
<div class="c" style="left:679px;width:123px;top:890px;height:27px;color:#000">12.08.2025 13:0</div>
<div class="c" style="left:806px;width:134px;top:890px;height:27px;color:#000">14.08.2025 14:01</div>
<div class="c" style="left:1288px;width:132px;top:890px;height:27px;color:#000">tabletki.ua</div>
<div class="c n" style="left:1423px;width:90px;text-align:right;top:890px;height:27px;color:#000">1291753</div>
<div class="c" style="left:1517px;width:155px;text-align:center;top:890px;height:27px;color:#000">П</div>
<div class="c" style="left:1677px;width:100px;top:890px;height:27px;color:#000">Отобран</div>
<div class="a" style="left:13px;top:918px;width:15px;height:28px;background:#f0f0f0"></div>
<div class="a" style="left:1421px;top:917px;width:357px;height:29px;background:#bfcbd8"></div>
<div class="c n" style="left:31px;width:48px;text-align:right;top:918px;height:28px;color:#000">16605</div>
<div class="c n" style="left:85px;width:103px;text-align:right;top:918px;height:28px;color:#000">9022812320</div>
<div class="c m" style="left:195px;width:136px;top:918px;height:28px;color:#000">0M-AB-CX-07</div>
<div class="c n" style="left:334px;width:131px;text-align:right;top:918px;height:28px;color:#000">3</div>
<div class="c s" style="left:472px;width:203px;top:918px;height:28px;color:#000">Продаж</div>
<div class="c" style="left:679px;width:123px;top:918px;height:28px;color:#000">12.08.2025 12:2</div>
<div class="c" style="left:806px;width:134px;top:918px;height:28px;color:#000">14.08.2025 13:25</div>
<div class="c" style="left:1288px;width:132px;top:918px;height:28px;color:#000">tabletki.ua</div>
<div class="c n" style="left:1423px;width:90px;text-align:right;top:918px;height:28px;color:#000">1291725</div>
<div class="c" style="left:1517px;width:155px;text-align:center;top:918px;height:28px;color:#000">А</div>
<div class="c" style="left:1677px;width:100px;top:918px;height:28px;color:#000">Отобран</div>
<div class="a" style="left:13px;top:947px;width:15px;height:27px;background:#f0f0f0"></div>
<div class="a" style="left:1421px;top:946px;width:357px;height:28px;background:#bfcbd8"></div>
<div class="c n" style="left:31px;width:48px;text-align:right;top:947px;height:27px;color:#000">16604</div>
<div class="c n" style="left:85px;width:103px;text-align:right;top:947px;height:27px;color:#000">4724720832</div>
<div class="c m" style="left:195px;width:136px;top:947px;height:27px;color:#000">C1-2A-9M-E3</div>
<div class="c n" style="left:334px;width:131px;text-align:right;top:947px;height:27px;color:#000">1</div>
<div class="c s" style="left:472px;width:203px;top:947px;height:27px;color:#000">Оброблено в аптеці</div>
<div class="c" style="left:679px;width:123px;top:947px;height:27px;color:#000">12.08.2025 12:0</div>
<div class="c" style="left:806px;width:134px;top:947px;height:27px;color:#000">14.08.2025 13:09</div>
<div class="c" style="left:1288px;width:132px;top:947px;height:27px;color:#000">tabletki.ua</div>
<div class="c n" style="left:1423px;width:90px;text-align:right;top:947px;height:27px;color:#000">1291716</div>
<div class="c" style="left:1517px;width:155px;text-align:center;top:947px;height:27px;color:#000">П</div>
<div class="c" style="left:1677px;width:100px;top:947px;height:27px;color:#000">Отобран</div>
<div class="a" style="left:13px;top:975px;width:15px;height:28px;background:#f0f0f0"></div>
<div class="a" style="left:1421px;top:974px;width:357px;height:29px;background:#bfcbd8"></div>
<div class="c n" style="left:31px;width:48px;text-align:right;top:975px;height:28px;color:#000">16603</div>
<div class="c n" style="left:85px;width:103px;text-align:right;top:975px;height:28px;color:#000">2396099684</div>
<div class="c m" style="left:195px;width:136px;top:975px;height:28px;color:#000">44-9C-K8-P1</div>
<div class="c n" style="left:334px;width:131px;text-align:right;top:975px;height:28px;color:#000">2</div>
<div class="c s" style="left:472px;width:203px;top:975px;height:28px;color:#000">Продаж</div>
<div class="c" style="left:679px;width:123px;top:975px;height:28px;color:#000">12.08.2025 11:1</div>
<div class="c" style="left:806px;width:134px;top:975px;height:28px;color:#000">14.08.2025 12:11</div>
<div class="c" style="left:1288px;width:132px;top:975px;height:28px;color:#000">tabletki.ua</div>
<div class="c n" style="left:1423px;width:90px;text-align:right;top:975px;height:28px;color:#000">1291670</div>
<div class="c" style="left:1517px;width:155px;text-align:center;top:975px;height:28px;color:#000">А</div>
<div class="c" style="left:1677px;width:100px;top:975px;height:28px;color:#000">Отобран</div>
<div class="a" style="left:13px;top:1004px;width:15px;height:27px;background:#f0f0f0"></div>
<div class="a" style="left:1421px;top:1003px;width:357px;height:28px;background:#bfcbd8"></div>
<div class="c n" style="left:31px;width:48px;text-align:right;top:1004px;height:27px;color:#000">16601</div>
<div class="c n" style="left:85px;width:103px;text-align:right;top:1004px;height:27px;color:#000">7157140480</div>
<div class="c m" style="left:195px;width:136px;top:1004px;height:27px;color:#000">04-B2-CM-B5</div>
<div class="c n" style="left:334px;width:131px;text-align:right;top:1004px;height:27px;color:#000">1</div>
<div class="c s" style="left:472px;width:203px;top:1004px;height:27px;color:#000">Оброблено в аптеці</div>
<div class="c" style="left:679px;width:123px;top:1004px;height:27px;color:#000">12.08.2025 10:4</div>
<div class="c" style="left:806px;width:134px;top:1004px;height:27px;color:#000">14.08.2025 11:43</div>
<div class="c" style="left:1288px;width:132px;top:1004px;height:27px;color:#000">tabletki.ua</div>
<div class="c n" style="left:1423px;width:90px;text-align:right;top:1004px;height:27px;color:#000">1291645</div>
<div class="c" style="left:1517px;width:155px;text-align:center;top:1004px;height:27px;color:#000">П</div>
<div class="c" style="left:1677px;width:100px;top:1004px;height:27px;color:#000">Отобран</div>
<div class="a" style="left:13px;top:1032px;width:15px;height:28px;background:#f0f0f0"></div>
<div class="a" style="left:1421px;top:1031px;width:357px;height:29px;background:#bfcbd8"></div>
<div class="c n" style="left:31px;width:48px;text-align:right;top:1032px;height:28px;color:#000">16602</div>
<div class="c n" style="left:85px;width:103px;text-align:right;top:1032px;height:28px;color:#000">4245001702</div>
<div class="c m" style="left:195px;width:136px;top:1032px;height:28px;color:#000">25-45-B6-63</div>
<div class="c n" style="left:334px;width:131px;text-align:right;top:1032px;height:28px;color:#000">1</div>
<div class="c s" style="left:472px;width:203px;top:1032px;height:28px;color:#000">Продаж</div>
<div class="c" style="left:679px;width:123px;top:1032px;height:28px;color:#000">12.08.2025 10:4</div>
<div class="c" style="left:806px;width:134px;top:1032px;height:28px;color:#000">14.08.2025 11:43</div>
<div class="c" style="left:1288px;width:132px;top:1032px;height:28px;color:#000">tabletki.ua</div>
<div class="c n" style="left:1423px;width:90px;text-align:right;top:1032px;height:28px;color:#000">1291646</div>
<div class="c" style="left:1517px;width:155px;text-align:center;top:1032px;height:28px;color:#000">А</div>
<div class="c" style="left:1677px;width:100px;top:1032px;height:28px;color:#000">Отобран</div>
<div class="a" style="left:13px;top:1061px;width:15px;height:27px;background:#f0f0f0"></div>
<div class="a" style="left:1421px;top:1060px;width:357px;height:28px;background:#bfcbd8"></div>
<div class="c n" style="left:31px;width:48px;text-align:right;top:1061px;height:27px;color:#000">16600</div>
<div class="c n" style="left:85px;width:103px;text-align:right;top:1061px;height:27px;color:#000">7735588244</div>
<div class="c m" style="left:195px;width:136px;top:1061px;height:27px;color:#000">4C-A8-7P-06</div>
<div class="c n" style="left:334px;width:131px;text-align:right;top:1061px;height:27px;color:#000">1</div>
<div class="c s" style="left:472px;width:203px;top:1061px;height:27px;color:#000">Продаж</div>
<div class="c" style="left:679px;width:123px;top:1061px;height:27px;color:#000">12.08.2025 09:3</div>
<div class="c" style="left:806px;width:134px;top:1061px;height:27px;color:#000">14.08.2025 10:35</div>
<div class="c" style="left:1288px;width:132px;top:1061px;height:27px;color:#000">tabletki.ua</div>
<div class="c n" style="left:1423px;width:90px;text-align:right;top:1061px;height:27px;color:#000">1291582</div>
<div class="c" style="left:1517px;width:155px;text-align:center;top:1061px;height:27px;color:#000">А</div>
<div class="c" style="left:1677px;width:100px;top:1061px;height:27px;color:#000">Отобран</div>
<div class="a" style="left:13px;top:1089px;width:15px;height:28px;background:#f0f0f0"></div>
<div class="a" style="left:1421px;top:1088px;width:357px;height:29px;background:#bfcbd8"></div>
<div class="c n" style="left:31px;width:48px;text-align:right;top:1089px;height:28px;color:#000">16599</div>
<div class="c n" style="left:85px;width:103px;text-align:right;top:1089px;height:28px;color:#000">2017303320</div>
<div class="c m" style="left:195px;width:136px;top:1089px;height:28px;color:#000">06-T2-8A-B1</div>
<div class="c n" style="left:334px;width:131px;text-align:right;top:1089px;height:28px;color:#000">1</div>
<div class="c s" style="left:472px;width:203px;top:1089px;height:28px;color:#000">Продаж</div>
<div class="c" style="left:679px;width:123px;top:1089px;height:28px;color:#000">12.08.2025 09:2</div>
<div class="c" style="left:806px;width:134px;top:1089px;height:28px;color:#000">14.08.2025 10:21</div>
<div class="c" style="left:1288px;width:132px;top:1089px;height:28px;color:#000">tabletki.ua</div>
<div class="c n" style="left:1423px;width:90px;text-align:right;top:1089px;height:28px;color:#000">1291568</div>
<div class="c" style="left:1517px;width:155px;text-align:center;top:1089px;height:28px;color:#000">А</div>
<div class="c" style="left:1677px;width:100px;top:1089px;height:28px;color:#000">Отобран</div>
<div class="a" style="left:13px;top:1118px;width:15px;height:27px;background:#f0f0f0"></div>
<div class="a" style="left:1421px;top:1117px;width:357px;height:28px;background:#bfcbd8"></div>
<div class="c n" style="left:31px;width:48px;text-align:right;top:1118px;height:27px;color:#000">16598</div>
<div class="c n" style="left:85px;width:103px;text-align:right;top:1118px;height:27px;color:#000">7889172742</div>
<div class="c m" style="left:195px;width:136px;top:1118px;height:27px;color:#000">2P-B6-75-36</div>
<div class="c n" style="left:334px;width:131px;text-align:right;top:1118px;height:27px;color:#000">1</div>
<div class="c s" style="left:472px;width:203px;top:1118px;height:27px;color:#000">Оброблено в аптеці</div>
<div class="c" style="left:679px;width:123px;top:1118px;height:27px;color:#000">12.08.2025 09:1</div>
<div class="c" style="left:806px;width:134px;top:1118px;height:27px;color:#000">14.08.2025 10:13</div>
<div class="c" style="left:1288px;width:132px;top:1118px;height:27px;color:#000">tabletki.ua</div>
<div class="c n" style="left:1423px;width:90px;text-align:right;top:1118px;height:27px;color:#000">1291563</div>
<div class="c" style="left:1517px;width:155px;text-align:center;top:1118px;height:27px;color:#000">П</div>
<div class="c" style="left:1677px;width:100px;top:1118px;height:27px;color:#000">Отобран</div>
<div class="a" style="left:13px;top:1146px;width:15px;height:28px;background:#f0f0f0"></div>
<div class="a" style="left:1421px;top:1145px;width:357px;height:29px;background:#bfcbd8"></div>
<div class="c n" style="left:31px;width:48px;text-align:right;top:1146px;height:28px;color:#000">16597</div>
<div class="c n" style="left:85px;width:103px;text-align:right;top:1146px;height:28px;color:#000">8013083028</div>
<div class="c m" style="left:195px;width:136px;top:1146px;height:28px;color:#000">8B-7K-14-56</div>
<div class="c n" style="left:334px;width:131px;text-align:right;top:1146px;height:28px;color:#000">2</div>
<div class="c s" style="left:472px;width:203px;top:1146px;height:28px;color:#000">Продаж</div>
<div class="c" style="left:679px;width:123px;top:1146px;height:28px;color:#000">12.08.2025 08:5</div>
<div class="c" style="left:806px;width:134px;top:1146px;height:28px;color:#000">14.08.2025 09:51</div>
<div class="c" style="left:1288px;width:132px;top:1146px;height:28px;color:#000">tabletki.ua</div>
<div class="c n" style="left:1423px;width:90px;text-align:right;top:1146px;height:28px;color:#000">1291539</div>
<div class="c" style="left:1517px;width:155px;text-align:center;top:1146px;height:28px;color:#000">А</div>
<div class="c" style="left:1677px;width:100px;top:1146px;height:28px;color:#000">Отобран</div>
<div class="a" style="left:13px;top:1175px;width:15px;height:27px;background:#f0f0f0"></div>
<div class="a" style="left:1421px;top:1174px;width:357px;height:28px;background:#bfcbd8"></div>
<div class="c n" style="left:31px;width:48px;text-align:right;top:1175px;height:27px;color:#000">16596</div>
<div class="c n" style="left:85px;width:103px;text-align:right;top:1175px;height:27px;color:#000">6832332304</div>
<div class="c m" style="left:195px;width:136px;top:1175px;height:27px;color:#000">4K-A1-2K-65</div>
<div class="c n" style="left:334px;width:131px;text-align:right;top:1175px;height:27px;color:#000">1</div>
<div class="c s" style="left:472px;width:203px;top:1175px;height:27px;color:#000">Продаж</div>
<div class="c" style="left:679px;width:123px;top:1175px;height:27px;color:#000">12.08.2025 08:0</div>
<div class="c" style="left:806px;width:134px;top:1175px;height:27px;color:#000">14.08.2025 09:03</div>
<div class="c" style="left:1288px;width:132px;top:1175px;height:27px;color:#000">tabletki.ua</div>
<div class="c n" style="left:1423px;width:90px;text-align:right;top:1175px;height:27px;color:#000">1291504</div>
<div class="c" style="left:1517px;width:155px;text-align:center;top:1175px;height:27px;color:#000">А</div>
<div class="c" style="left:1677px;width:100px;top:1175px;height:27px;color:#000">Отобран</div>
<div class="a" style="left:13px;top:1203px;width:15px;height:28px;background:#f0f0f0"></div>
<div class="a" style="left:1421px;top:1202px;width:357px;height:29px;background:#bfcbd8"></div>
<div class="c n" style="left:31px;width:48px;text-align:right;top:1203px;height:28px;color:#000">16595</div>
<div class="c n" style="left:85px;width:103px;text-align:right;top:1203px;height:28px;color:#000">1330956106</div>
<div class="c m" style="left:195px;width:136px;top:1203px;height:28px;color:#000">65-A9-TK-01</div>
<div class="c n" style="left:334px;width:131px;text-align:right;top:1203px;height:28px;color:#000">4</div>
<div class="c s" style="left:472px;width:203px;top:1203px;height:28px;color:#000">Продаж</div>
<div class="c" style="left:679px;width:123px;top:1203px;height:28px;color:#000">12.08.2025 07:2</div>
<div class="c" style="left:806px;width:134px;top:1203px;height:28px;color:#000">14.08.2025 08:26</div>
<div class="c" style="left:1288px;width:132px;top:1203px;height:28px;color:#000">tabletki.ua</div>
<div class="c n" style="left:1423px;width:90px;text-align:right;top:1203px;height:28px;color:#000">1291493</div>
<div class="c" style="left:1517px;width:155px;text-align:center;top:1203px;height:28px;color:#000">А</div>
<div class="c" style="left:1677px;width:100px;top:1203px;height:28px;color:#000">Отобран</div>
<div class="a" style="left:13px;top:1232px;width:15px;height:27px;background:#f0f0f0"></div>
<div class="a" style="left:1421px;top:1231px;width:357px;height:18px;background:#bfcbd8"></div>
<div class="c n" style="left:31px;width:48px;text-align:right;top:1232px;height:17px;color:#000">16594</div>
<div class="c n" style="left:85px;width:103px;text-align:right;top:1232px;height:17px;color:#000">3923853400</div>
<div class="c m" style="left:195px;width:136px;top:1232px;height:17px;color:#000">0A-E1-46-13</div>
<div class="c n" style="left:334px;width:131px;text-align:right;top:1232px;height:17px;color:#000">1</div>
<div class="c s" style="left:472px;width:203px;top:1232px;height:17px;color:#000">Продаж</div>
<div class="c" style="left:679px;width:123px;top:1232px;height:17px;color:#000">12.08.2025 07:1</div>
<div class="c" style="left:806px;width:134px;top:1232px;height:17px;color:#000">14.08.2025 08:14</div>
<div class="c" style="left:1288px;width:132px;top:1232px;height:17px;color:#000">tabletki.ua</div>
<div class="c n" style="left:1423px;width:90px;text-align:right;top:1232px;height:17px;color:#000">1291487</div>
<div class="c" style="left:1517px;width:155px;text-align:center;top:1232px;height:17px;color:#000">А</div>
<div class="c" style="left:1677px;width:100px;top:1232px;height:17px;color:#000">Отобран</div>
<div class="a" style="left:12px;top:261px;width:1767px;height:1px;background:rgba(0,0,0,0.11)"></div>
<div class="a" style="left:12px;top:318px;width:1767px;height:1px;background:rgba(0,0,0,0.11)"></div>
<div class="a" style="left:12px;top:375px;width:1767px;height:1px;background:rgba(0,0,0,0.11)"></div>
<div class="a" style="left:12px;top:432px;width:1767px;height:1px;background:rgba(0,0,0,0.11)"></div>
<div class="a" style="left:12px;top:489px;width:1767px;height:1px;background:rgba(0,0,0,0.11)"></div>
<div class="a" style="left:12px;top:546px;width:1767px;height:1px;background:rgba(0,0,0,0.11)"></div>
<div class="a" style="left:12px;top:603px;width:1767px;height:1px;background:rgba(0,0,0,0.11)"></div>
<div class="a" style="left:12px;top:660px;width:1767px;height:1px;background:rgba(0,0,0,0.11)"></div>
<div class="a" style="left:12px;top:717px;width:1767px;height:1px;background:rgba(0,0,0,0.11)"></div>
<div class="a" style="left:12px;top:774px;width:1767px;height:1px;background:rgba(0,0,0,0.11)"></div>
<div class="a" style="left:12px;top:831px;width:1767px;height:1px;background:rgba(0,0,0,0.11)"></div>
<div class="a" style="left:12px;top:888px;width:1767px;height:1px;background:rgba(0,0,0,0.11)"></div>
<div class="a" style="left:12px;top:945px;width:1767px;height:1px;background:rgba(0,0,0,0.11)"></div>
<div class="a" style="left:12px;top:1002px;width:1767px;height:1px;background:rgba(0,0,0,0.11)"></div>
<div class="a" style="left:12px;top:1059px;width:1767px;height:1px;background:rgba(0,0,0,0.11)"></div>
<div class="a" style="left:12px;top:1116px;width:1767px;height:1px;background:rgba(0,0,0,0.11)"></div>
<div class="a" style="left:12px;top:1173px;width:1767px;height:1px;background:rgba(0,0,0,0.11)"></div>
<div class="a" style="left:12px;top:1230px;width:1767px;height:1px;background:rgba(0,0,0,0.11)"></div>
<div class="a" style="left:28px;top:234px;width:1px;height:1015px;background:rgba(0,0,0,0.11)"></div>
<div class="a" style="left:82px;top:234px;width:1px;height:1015px;background:rgba(0,0,0,0.11)"></div>
<div class="a" style="left:191px;top:234px;width:1px;height:1015px;background:rgba(0,0,0,0.11)"></div>
<div class="a" style="left:331px;top:234px;width:1px;height:1015px;background:rgba(0,0,0,0.11)"></div>
<div class="a" style="left:468px;top:234px;width:1px;height:1015px;background:rgba(0,0,0,0.11)"></div>
<div class="a" style="left:675px;top:234px;width:1px;height:1015px;background:rgba(0,0,0,0.11)"></div>
<div class="a" style="left:802px;top:234px;width:1px;height:1015px;background:rgba(0,0,0,0.11)"></div>
<div class="a" style="left:940px;top:234px;width:1px;height:1015px;background:rgba(0,0,0,0.11)"></div>
<div class="a" style="left:1090px;top:234px;width:1px;height:1015px;background:rgba(0,0,0,0.11)"></div>
<div class="a" style="left:1284px;top:234px;width:1px;height:1015px;background:rgba(0,0,0,0.11)"></div>
<div class="a" style="left:1420px;top:234px;width:1px;height:1015px;background:rgba(0,0,0,0.11)"></div>
<div class="a" style="left:1516px;top:234px;width:1px;height:1015px;background:rgba(0,0,0,0.11)"></div>
<div class="a" style="left:1673px;top:234px;width:1px;height:1015px;background:rgba(0,0,0,0.11)"></div>
<div class="a" style="left:1777px;top:234px;width:1px;height:1015px;background:rgba(0,0,0,0.11)"></div>
<div class="a" style="left:12px;top:262px;width:1767px;height:1px;background:#a8a8a8"></div>
<div class="a" style="left:12px;top:290px;width:1767px;height:2px;background:#b2b2b2"></div>
<div class="a" style="left:12px;top:319px;width:1767px;height:1px;background:#a8a8a8"></div>
<div class="a" style="left:12px;top:347px;width:1767px;height:2px;background:#b2b2b2"></div>
<div class="a" style="left:12px;top:376px;width:1767px;height:1px;background:#a8a8a8"></div>
<div class="a" style="left:12px;top:404px;width:1767px;height:2px;background:#b2b2b2"></div>
<div class="a" style="left:12px;top:433px;width:1767px;height:1px;background:#a8a8a8"></div>
<div class="a" style="left:12px;top:461px;width:1767px;height:2px;background:#b2b2b2"></div>
<div class="a" style="left:12px;top:490px;width:1767px;height:1px;background:#a8a8a8"></div>
<div class="a" style="left:12px;top:518px;width:1767px;height:2px;background:#b2b2b2"></div>
<div class="a" style="left:12px;top:547px;width:1767px;height:1px;background:#a8a8a8"></div>
<div class="a" style="left:12px;top:575px;width:1767px;height:2px;background:#b2b2b2"></div>
<div class="a" style="left:12px;top:604px;width:1767px;height:1px;background:#a8a8a8"></div>
<div class="a" style="left:12px;top:632px;width:1767px;height:2px;background:#b2b2b2"></div>
<div class="a" style="left:12px;top:661px;width:1767px;height:1px;background:#a8a8a8"></div>
<div class="a" style="left:12px;top:689px;width:1767px;height:2px;background:#b2b2b2"></div>
<div class="a" style="left:12px;top:718px;width:1767px;height:1px;background:#a8a8a8"></div>
<div class="a" style="left:12px;top:746px;width:1767px;height:2px;background:#b2b2b2"></div>
<div class="a" style="left:12px;top:775px;width:1767px;height:1px;background:#a8a8a8"></div>
<div class="a" style="left:12px;top:803px;width:1767px;height:2px;background:#b2b2b2"></div>
<div class="a" style="left:12px;top:832px;width:1767px;height:1px;background:#a8a8a8"></div>
<div class="a" style="left:12px;top:860px;width:1767px;height:2px;background:#b2b2b2"></div>
<div class="a" style="left:12px;top:889px;width:1767px;height:1px;background:#a8a8a8"></div>
<div class="a" style="left:12px;top:917px;width:1767px;height:2px;background:#b2b2b2"></div>
<div class="a" style="left:12px;top:946px;width:1767px;height:1px;background:#a8a8a8"></div>
<div class="a" style="left:12px;top:974px;width:1767px;height:2px;background:#b2b2b2"></div>
<div class="a" style="left:12px;top:1003px;width:1767px;height:1px;background:#a8a8a8"></div>
<div class="a" style="left:12px;top:1031px;width:1767px;height:2px;background:#b2b2b2"></div>
<div class="a" style="left:12px;top:1060px;width:1767px;height:1px;background:#a8a8a8"></div>
<div class="a" style="left:12px;top:1088px;width:1767px;height:2px;background:#b2b2b2"></div>
<div class="a" style="left:12px;top:1117px;width:1767px;height:1px;background:#a8a8a8"></div>
<div class="a" style="left:12px;top:1145px;width:1767px;height:2px;background:#b2b2b2"></div>
<div class="a" style="left:12px;top:1174px;width:1767px;height:1px;background:#a8a8a8"></div>
<div class="a" style="left:12px;top:1202px;width:1767px;height:2px;background:#b2b2b2"></div>
<div class="a" style="left:12px;top:1231px;width:1767px;height:1px;background:#a8a8a8"></div>
<div class="a" style="left:29px;top:234px;width:1px;height:1015px;background:#a8a8a8"></div>
<div class="a" style="left:83px;top:234px;width:1px;height:1015px;background:#a8a8a8"></div>
<div class="a" style="left:192px;top:234px;width:1px;height:1015px;background:#a8a8a8"></div>
<div class="a" style="left:332px;top:234px;width:1px;height:1015px;background:#a8a8a8"></div>
<div class="a" style="left:469px;top:234px;width:1px;height:1015px;background:#a8a8a8"></div>
<div class="a" style="left:676px;top:234px;width:1px;height:1015px;background:#a8a8a8"></div>
<div class="a" style="left:803px;top:234px;width:1px;height:1015px;background:#a8a8a8"></div>
<div class="a" style="left:941px;top:234px;width:1px;height:1015px;background:#a8a8a8"></div>
<div class="a" style="left:1091px;top:234px;width:1px;height:1015px;background:#a8a8a8"></div>
<div class="a" style="left:1285px;top:234px;width:1px;height:1015px;background:#a8a8a8"></div>
<div class="a" style="left:1421px;top:234px;width:1px;height:1015px;background:#a8a8a8"></div>
<div class="a" style="left:1517px;top:234px;width:1px;height:1015px;background:#a8a8a8"></div>
<div class="a" style="left:1674px;top:234px;width:1px;height:1015px;background:#a8a8a8"></div>
<div class="a" style="left:1778px;top:234px;width:1px;height:1015px;background:#a8a8a8"></div>
<div class="a" style="left:29px;top:377px;width:440px;height:1px;background:repeating-linear-gradient(90deg,#e0904a 0 1.5px,#1a7ad0 1.5px 3px)"></div>
<div class="a" style="left:29px;top:403px;width:440px;height:1px;background:repeating-linear-gradient(90deg,#e0904a 0 1.5px,#1a7ad0 1.5px 3px)"></div>
<div class="a" style="left:676px;top:377px;width:1103px;height:1px;background:repeating-linear-gradient(90deg,#e0904a 0 1.5px,#1a7ad0 1.5px 3px)"></div>
<div class="a" style="left:676px;top:403px;width:1103px;height:1px;background:repeating-linear-gradient(90deg,#e0904a 0 1.5px,#1a7ad0 1.5px 3px)"></div>
<div class="a" style="left:1778px;top:376px;width:1px;height:28px;background:repeating-linear-gradient(180deg,#e0904a 0 1.5px,#1a7ad0 1.5px 3px)"></div>
<div class="a" style="left:469px;top:377px;width:207px;height:1px;background:repeating-linear-gradient(90deg,#000 0 1px,#fff 1px 2px)"></div>
<div class="a" style="left:469px;top:403px;width:207px;height:1px;background:repeating-linear-gradient(90deg,#000 0 1px,#fff 1px 2px)"></div>
<div class="a" style="left:470px;top:376px;width:1px;height:28px;background:repeating-linear-gradient(180deg,#000 0 1px,#fff 1px 2px)"></div>
</div>
<div class="a" style="left:2136px;top:205px;width:23px;height:1045px;background:#f0f0f0"></div>
<div class="a" style="left:2136px;top:300px;width:23px;height:163px;background:#cdcdcd"></div>
<svg class="a" style="left:2141px;top:212px" width="12" height="13" viewBox="0 0 12 13"><path d="M1.2 10.4L6 5.2l4.8 5.2" fill="none" stroke="#626262" stroke-width="2.8"/></svg>
<svg class="a" style="left:2141px;top:1230px" width="12" height="13" viewBox="0 0 12 13"><path d="M1.2 3L6 8.2 10.8 3" fill="none" stroke="#5a5a5a" stroke-width="2.8"/></svg>
<div class="a" style="left:127px;top:1250px;width:2032px;height:27px;background:#f0f0f0"></div>
<svg class="a" style="left:264px;top:1258px" width="9" height="12" viewBox="0 0 9 12"><path d="M7 1.2L2.4 6l4.6 4.8" fill="none" stroke="#bdbdbd" stroke-width="2.4"/></svg>
<svg class="a" style="left:2118px;top:1258px" width="9" height="12" viewBox="0 0 9 12"><path d="M2 1.2L6.6 6 2 10.8" fill="none" stroke="#bdbdbd" stroke-width="2.4"/></svg>
<div class="a" style="left:14px;top:1251px;width:24px;height:25px;background:#e1e1e1;border:1px solid #adadad"></div>
<div class="a" style="left:129px;top:1251px;width:24px;height:25px;background:#e1e1e1;border:1px solid #adadad"></div>
<div class="a" style="left:156px;top:1251px;width:24px;height:25px;background:#e1e1e1;border:1px solid #adadad"></div>
<svg class="a" style="left:20px;top:1257px" width="13" height="13" viewBox="0 0 13 13"><path d="M1 1h2v11H1z M3 6.5L7.5 1v11z M7.5 6.5L12 1v11z" fill="#333"/></svg>
<svg class="a" style="left:135px;top:1257px" width="13" height="13" viewBox="0 0 13 13"><path d="M10 1h2v11h-2z M10 6.5L5.5 1v11z M5.5 6.5L1 1v11z" fill="#333"/></svg>
<svg class="a" style="left:161px;top:1257px" width="14" height="12" viewBox="0 0 14 12"><path d="M2 1h10a1 1 0 0 1 1 1v2l-3 3v4H5V7L1 4V2a1 1 0 0 1 1-1z" fill="#f07800"/><rect x="4" y="2.5" width="6" height="1.2" fill="#ffd8a0"/></svg>
<div class="t" style="left:47px;top:1253px;font-size:16.5px;line-height:22px;color:#000">21 из 215</div>
<div class="a" style="left:7px;top:1281px;width:2155px;height:1px;background:#d0d0d0"></div>
<div class="a" style="left:6px;top:1282px;width:2159px;height:9px;background:#f0f0f0"></div>
<div class="a" style="left:11px;top:1287px;width:187px;height:10px;border:2px solid #1a1a1a;background:#fafafa"></div>
<div class="a" style="left:201px;top:1287px;width:187px;height:10px;border:2px solid #2a8be0;background:#fdd0a2"></div>
<div class="a" style="left:4px;top:25px;width:464px;height:53px;border:4px solid #ff0000;border-radius:2px;filter:drop-shadow(0 1px 0.6px rgba(0,40,40,0.55))"></div>
<svg class="a" style="left:460px;top:36px;filter:drop-shadow(0 1px 0.6px rgba(0,40,40,0.5))" width="462" height="24" viewBox="460 36 462 24"><path d="M470 44L918 47.7L918 50L470 51.5z" fill="#f00"/><path d="M479.5 40.5L466 47.8L479.5 55" fill="none" stroke="#f00" stroke-width="3.5" stroke-linecap="round" stroke-linejoin="round"/><path d="M466 46h10v4h-10z" fill="#f00"/></svg>
</body></html>
